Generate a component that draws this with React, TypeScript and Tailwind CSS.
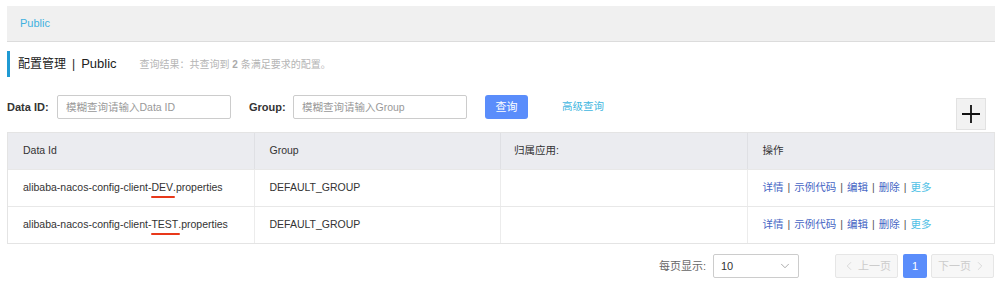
import { ChevronDown, ChevronLeft, ChevronRight } from "lucide-react";

const rows = [
  { prefix: "alibaba-nacos-config-client-", env: "DEV", group: "DEFAULT_GROUP" },
  { prefix: "alibaba-nacos-config-client-", env: "TEST", group: "DEFAULT_GROUP" },
];

const actions = ["详情", "示例代码", "编辑", "删除"];

export default function App() {
  return (
    <div className="w-[999px] h-[297px] bg-white pt-[6px] pl-[7px] pr-[4px] font-['Liberation_Sans','Noto_Sans_CJK_SC',sans-serif] text-[#333] overflow-hidden">
      {/* Breadcrumb bar */}
      <div className="h-[36px] bg-[#f0f0f0] border-b border-[#dcdcdc] flex items-center pl-[13px] text-[11px] text-[#3fb0df]">
        Public
      </div>

      {/* Title */}
      <div className="mt-[9px] h-[26px] border-l-[3px] border-[#1f9ad3] flex items-center pl-[8px]">
        <span className="text-[12px] text-[#222]">配置管理</span>
        <span className="text-[12px] text-[#222] mx-[6px]">|</span>
        <span className="text-[13px] text-[#222]">Public</span>
        <span className="ml-[23px] text-[10px] text-[#b5b5b5]">
          查询结果：共查询到 <b className="text-[#aaa]">2</b> 条满足要求的配置。
        </span>
      </div>

      {/* Search form */}
      <div className="mt-[18px] h-[37px] flex justify-between">
        <div className="flex items-center h-[24px] text-[11px]">
          <label className="font-bold text-[#333] w-[50px]">Data ID:</label>
          <input
            placeholder="模糊查询请输入Data ID"
            className="w-[174px] h-[24px] border border-[#ccc] rounded-[2px] px-[8px] text-[10.5px] placeholder:text-[#999] outline-none"
          />
          <label className="font-bold text-[#333] ml-[18px] w-[44px]">Group:</label>
          <input
            placeholder="模糊查询请输入Group"
            className="w-[174px] h-[24px] border border-[#ccc] rounded-[2px] px-[8px] text-[10.5px] placeholder:text-[#999] outline-none"
          />
          <button className="ml-[18px] w-[43px] h-[24px] bg-[#5a8dfb] text-white rounded-[3px] text-[11px]">
            查询
          </button>
          <a className="ml-[34px] text-[10.5px] text-[#3fb6e0]">高级查询</a>
        </div>
        <button className="mt-[3px] mr-[9px] w-[30px] h-[32px] bg-[#f2f2f2] border border-[#e2e2e2] flex items-center justify-center">
          <svg width="20" height="20" viewBox="0 0 20 20">
            <path d="M10 1v18M1 10h18" stroke="#111" strokeWidth="1.8" fill="none" />
          </svg>
        </button>
      </div>

      {/* Table */}
      <div className="border border-[#e4e4e4] text-[10.5px]">
        <div className="grid grid-cols-4 h-[36px] bg-[#ebecf0] text-[#333]">
          <div className="pl-[15px] flex items-center border-r border-[#dfe0e4]">Data Id</div>
          <div className="pl-[15px] flex items-center border-r border-[#dfe0e4]">Group</div>
          <div className="pl-[13px] flex items-center border-r border-[#dfe0e4]">归属应用:</div>
          <div className="pl-[15px] flex items-center">操作</div>
        </div>
        {rows.map((r) => (
          <div key={r.env} className="grid grid-cols-4 h-[37px] border-t border-[#e8e8e8]">
            <div className="pl-[15px] flex items-center border-r border-[#ececec]">
              <span>
                {r.prefix}
                <span className="relative">
                  {r.env}
                  <span className="absolute left-0 right-[-2px] top-full mt-[3px] h-[2px] rounded-full bg-[#e8381a]" />
                </span>
                .properties
              </span>
            </div>
            <div className="pl-[15px] flex items-center border-r border-[#ececec]">{r.group}</div>
            <div className="border-r border-[#ececec]" />
            <div className="pl-[15px] flex items-center">
              {actions.map((a) => (
                <span key={a} className="flex items-center">
                  <a className="text-[#4565c4]">{a}</a>
                  <span className="text-[#555] mx-[4px]">|</span>
                </span>
              ))}
              <a className="text-[#4fc1e6]">更多</a>
            </div>
          </div>
        ))}
      </div>

      {/* Pagination */}
      <div className="mt-[10px] flex justify-end items-center h-[24px] text-[11px]">
        <span className="text-[#666] mr-[7px]">每页显示:</span>
        <div className="w-[86px] h-[24px] border border-[#ccc] rounded-[2px] flex items-center justify-between pl-[7px] pr-[6px]">
          <span className="text-[#333]">10</span>
          <ChevronDown size={14} strokeWidth={1.2} className="text-[#888]" />
        </div>
        <button className="ml-[36px] w-[63px] h-[24px] border border-[#e6e6e6] bg-[#f7f7f7] rounded-[2px] text-[#ccc] flex items-center justify-center gap-[2px]">
          <ChevronLeft size={14} strokeWidth={1.2} />
          上一页
        </button>
        <button className="ml-[5px] w-[24px] h-[24px] bg-[#5a8dfb] rounded-[2px] text-white">1</button>
        <button className="ml-[4px] mr-[1px] w-[63px] h-[24px] border border-[#e6e6e6] bg-[#f7f7f7] rounded-[2px] text-[#ccc] flex items-center justify-center gap-[2px]">
          下一页
          <ChevronRight size={14} strokeWidth={1.2} />
        </button>
      </div>
    </div>
  );
}
